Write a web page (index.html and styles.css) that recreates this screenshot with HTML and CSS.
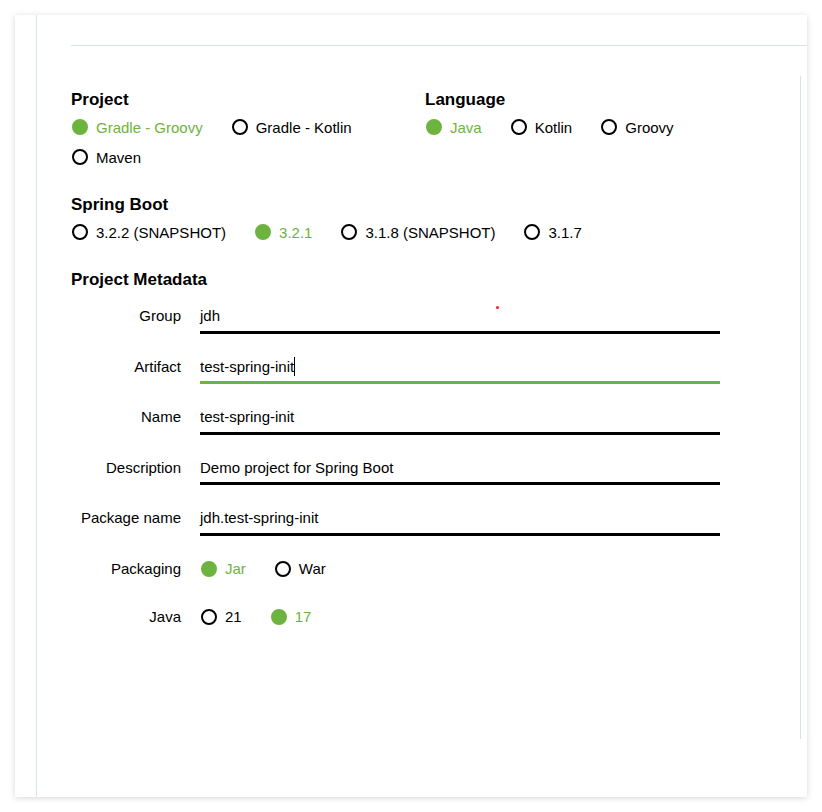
FILE: index.html
```html
<!DOCTYPE html>
<html lang="en">
<head>
<meta charset="utf-8">
<title>Spring Initializr</title>
<link rel="stylesheet" href="styles.css">
</head>
<body>
<div class="card">
  <aside class="sidebar"></aside>
  <div class="main">
    <div class="topbar"></div>
    <div class="content">
      <form class="form">
        <div class="columns">
          <section class="group">
            <h2 class="heading">Project</h2>
            <div class="radios">
              <div class="radio is-checked"><span class="radio-mark"></span>Gradle - Groovy</div>
              <div class="radio"><span class="radio-mark"></span>Gradle - Kotlin</div>
              <div class="radio"><span class="radio-mark"></span>Maven</div>
            </div>
          </section>
          <section class="group">
            <h2 class="heading">Language</h2>
            <div class="radios">
              <div class="radio is-checked"><span class="radio-mark"></span>Java</div>
              <div class="radio"><span class="radio-mark"></span>Kotlin</div>
              <div class="radio"><span class="radio-mark"></span>Groovy</div>
            </div>
          </section>
        </div>
        <section class="group">
          <h2 class="heading">Spring Boot</h2>
          <div class="radios">
            <div class="radio"><span class="radio-mark"></span>3.2.2 (SNAPSHOT)</div>
            <div class="radio is-checked"><span class="radio-mark"></span>3.2.1</div>
            <div class="radio"><span class="radio-mark"></span>3.1.8 (SNAPSHOT)</div>
            <div class="radio"><span class="radio-mark"></span>3.1.7</div>
          </div>
        </section>
        <section class="group">
          <h2 class="heading">Project Metadata</h2>
          <div class="fields">
            <div class="field-row">
              <div class="field-label">Group</div>
              <div class="field-value">jdh</div>
            </div>
            <div class="field-row">
              <div class="field-label">Artifact</div>
              <div class="field-value is-focused">test-spring-init<span class="caret"></span></div>
            </div>
            <div class="field-row">
              <div class="field-label">Name</div>
              <div class="field-value">test-spring-init</div>
            </div>
            <div class="field-row">
              <div class="field-label">Description</div>
              <div class="field-value">Demo project for Spring Boot</div>
            </div>
            <div class="field-row">
              <div class="field-label">Package name</div>
              <div class="field-value">jdh.test-spring-init</div>
            </div>
            <div class="field-row choice-row">
              <div class="field-label">Packaging</div>
              <div class="choice">
                <div class="radio small is-checked"><span class="radio-mark"></span>Jar</div>
                <div class="radio small"><span class="radio-mark"></span>War</div>
              </div>
            </div>
            <div class="field-row choice-row">
              <div class="field-label">Java</div>
              <div class="choice">
                <div class="radio small"><span class="radio-mark"></span>21</div>
                <div class="radio small is-checked"><span class="radio-mark"></span>17</div>
              </div>
            </div>
          </div>
        </section>
      </form>
      <div class="rail"></div>
    </div>
  </div>
</div>
<span class="dot"></span>
</body>
</html>
```

FILE: styles.css
```css
html, body {
  margin: 0;
  background: #ffffff;
  font-family: "Liberation Sans", Arial, sans-serif;
  color: #000;
}

.card {
  margin: 15px;
  height: 782px;
  display: flex;
  background: #ffffff;
  box-shadow: 0 1px 6px rgba(0, 0, 0, 0.16);
}

.sidebar {
  flex: none;
  width: 21px;
  border-right: 1px solid #d9e6e8;
}

.main {
  flex: 1;
  min-width: 0;
  display: flex;
  flex-direction: column;
}

.topbar {
  height: 30px;
  margin-left: 34px;
  border-bottom: 1px solid #d9e6e8;
}

.content {
  flex: 1;
  display: flex;
}

.form {
  flex: 1;
  margin: 0;
  padding: 42px 0 0 34px;
}

.rail {
  flex: none;
  width: 0;
  height: 663px;
  margin: 30px 6px 0 0;
  border-left: 1px solid #d3e3e6;
}

.columns {
  display: grid;
  grid-template-columns: 354px 1fr;
}

.group {
  margin-bottom: 21px;
}

.heading {
  margin: 0;
  font-size: 17px;
  line-height: 24px;
  font-weight: bold;
  color: #000;
}

.radios {
  display: flex;
  flex-wrap: wrap;
}

.radio {
  display: flex;
  align-items: center;
  height: 30px;
  margin-right: 28px;
  font-size: 15px;
  color: #000;
  white-space: nowrap;
}

.radio.small {
  height: 20px;
  line-height: 20px;
}

.radio-mark {
  flex: none;
  width: 16px;
  height: 16px;
  box-sizing: border-box;
  border: 2px solid #000;
  border-radius: 50%;
  margin: 0 8px 0 1px;
}

.radio.is-checked {
  color: #6db33f;
}

.radio.is-checked .radio-mark {
  border-color: #6db33f;
  background: #6db33f;
}

.fields {
  padding-top: 3.5px;
}

.field-row {
  display: grid;
  grid-template-columns: 110px 520px;
  column-gap: 19px;
  margin-bottom: 12.5px;
  font-size: 15px;
}

.field-label {
  padding-top: 10.5px;
  line-height: 20px;
  text-align: right;
  color: #000;
}

.field-value {
  padding: 10.5px 0 4.5px;
  line-height: 20px;
  border-bottom: 3px solid #000;
  color: #000;
}

.field-value.is-focused {
  border-bottom-color: #6db33f;
}

.caret {
  display: inline-block;
  width: 1px;
  height: 19px;
  background: #000;
  vertical-align: -4px;
}

.choice-row {
  margin-bottom: 11.5px;
}

.choice {
  display: flex;
  padding: 10.5px 0 6.5px;
}

.dot {
  position: absolute;
  left: 496px;
  top: 306px;
  width: 3px;
  height: 3px;
  border-radius: 50%;
  background: #ff1a1a;
}
```
